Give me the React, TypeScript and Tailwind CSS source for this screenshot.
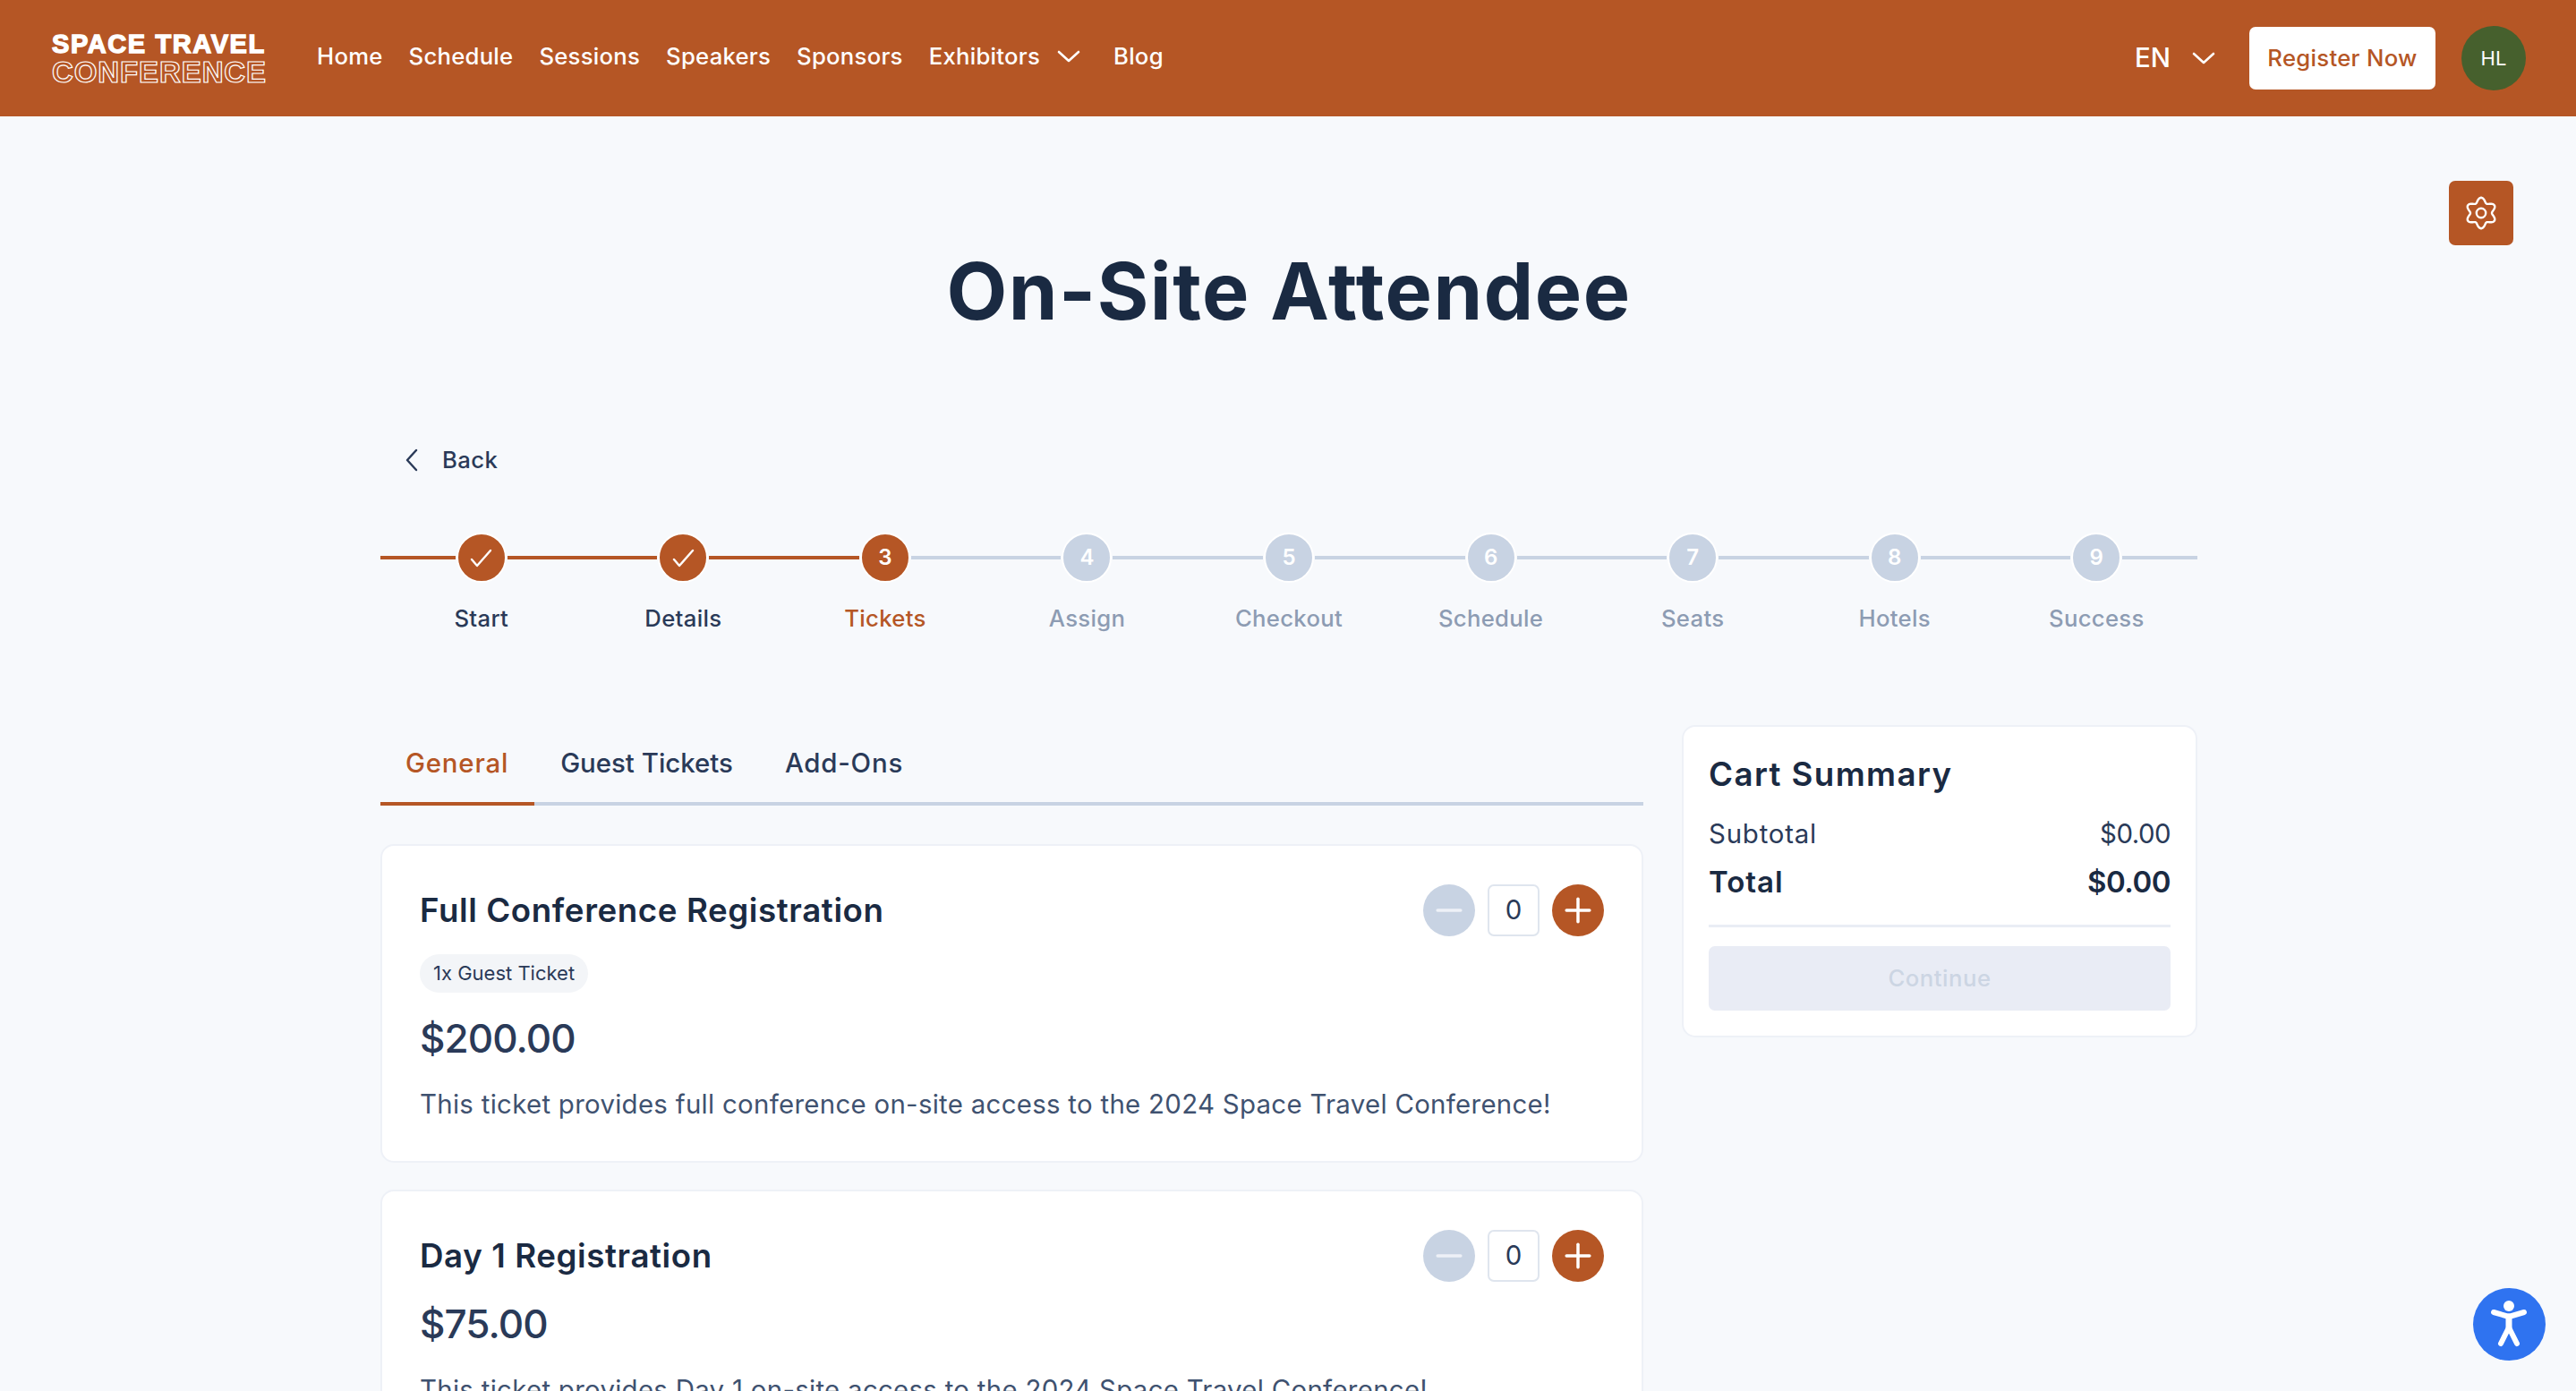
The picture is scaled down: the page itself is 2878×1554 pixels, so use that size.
import { Minus, Plus } from "lucide-react";

const navItems = ["Home", "Schedule", "Sessions", "Speakers", "Sponsors", "Exhibitors"];
const steps = ["Start", "Details", "Tickets", "Assign", "Checkout", "Schedule", "Seats", "Hotels", "Success"];

// six lobed outline of the settings cog
const cogPoints = Array.from({ length: 120 }, (_, i) => {
  const t = (i / 120) * Math.PI * 2;
  const r = 14.6 + 2.6 * Math.cos(6 * t);
  return `${(19 + r * Math.sin(t)).toFixed(2)},${(19 - r * Math.cos(t)).toFixed(2)}`;
}).join(" ");

function ChevronDown({ className }: { className?: string }) {
  return (
    <svg viewBox="0 0 26 14" className={className} fill="none" stroke="currentColor" strokeWidth="2.6" strokeLinecap="round" strokeLinejoin="round">
      <path d="M2 2l11 10L24 2" />
    </svg>
  );
}

function Header() {
  return (
    <header className="flex h-[130px] items-center bg-[#b55625] pl-[58px] pr-[56px] text-white">
      <div className="flex w-[240px] flex-col items-start font-['Liberation_Sans',sans-serif]">
        <span className="h-[31px] whitespace-nowrap text-[29px] leading-[31px] font-black tracking-[1.6px] [-webkit-text-stroke:1.4px_white]">SPACE TRAVEL</span>
        <span className="h-[31px] whitespace-nowrap text-[33px] leading-[31px] font-bold tracking-[0.9px] text-transparent [-webkit-text-stroke:1.2px_white]">CONFERENCE</span>
      </div>
      <nav className="ml-[56px] -mt-[3px] flex items-center gap-[29px] text-[25.7px] font-medium tracking-[0.25px]">
        {navItems.map((item) => (
          <a key={item}>{item}</a>
        ))}
        <ChevronDown className="-ml-[10px] h-[14px] w-[26px]" />
        <a className="ml-[8px]">Blog</a>
      </nav>
      <div className="ml-auto flex items-center">
        <span className="ml-[2px] text-[29.4px] font-medium">EN</span>
        <ChevronDown className="ml-[24px] h-[14px] w-[26px]" />
        <button className="ml-[38px] flex h-[70px] w-[208px] items-center justify-center rounded-[7px] bg-white text-[25.7px] font-medium tracking-[0.3px] text-[#b55625]">Register Now</button>
        <div className="ml-[29px] flex h-[72px] w-[72px] items-center justify-center rounded-full bg-[#46602d] text-[22px]">HL</div>
      </div>
    </header>
  );
}

function Stepper() {
  return (
    <div className="mt-[62px] flex">
      {steps.map((step, i) => {
        const done = i < 2;
        const current = i === 2;
        const reached = done || current;
        return (
          <div key={step} className="flex flex-1 flex-col items-center">
            <div className="relative flex h-[56px] w-full items-center justify-center">
              <div className={`absolute left-0 h-[4px] w-[calc(50%-29px)] ${reached ? "bg-[#b55625]" : "bg-[#c8d3e3]"}`} />
              <div className={`absolute right-0 h-[4px] w-[calc(50%-29px)] ${done ? "bg-[#b55625]" : "bg-[#c8d3e3]"}`} />
              <div className={`flex h-[56px] w-[56px] items-center justify-center rounded-full border-2 border-white text-[24px] font-semibold ${reached ? "bg-[#b55625] text-white" : "bg-[#c8d3e3] text-white"}`}>
                {done ? (
                  <svg viewBox="0 0 25 21" className="h-[21px] w-[25px]" fill="none" stroke="currentColor" strokeWidth="2.4" strokeLinecap="round" strokeLinejoin="round">
                    <path d="M2 12l6 7L23 2" />
                  </svg>
                ) : (
                  i + 1
                )}
              </div>
            </div>
            <span className={`mt-[21px] text-[25.7px] leading-[38px] font-medium tracking-[0.3px] ${done ? "text-[#2a3a58]" : current ? "text-[#b55625]" : "text-[#8d9cb3]"}`}>{step}</span>
          </div>
        );
      })}
    </div>
  );
}

function Counter() {
  return (
    <div className="flex items-center gap-[14px]">
      <button className="flex h-[58px] w-[58px] items-center justify-center rounded-full bg-[#c8d3e3] text-[#eef1f7]">
        <Minus size={44} strokeWidth={1.9} />
      </button>
      <div className="flex h-[58px] w-[58px] items-center justify-center rounded-[7px] border-2 border-[#dfe5ee] bg-white text-[29.4px] text-[#2a3a58]">0</div>
      <button className="flex h-[58px] w-[58px] items-center justify-center rounded-full bg-[#b55625] text-white">
        <Plus size={44} strokeWidth={1.9} />
      </button>
    </div>
  );
}

function TicketCard({ title, badge, price, description }: { title: string; badge?: string; price: string; description: string }) {
  return (
    <div className="rounded-[15px] border-2 border-[#eef1f7] bg-white px-[42px] pt-[43px] pb-[41px]">
      <div className="flex items-center justify-between">
        <h2 className="text-[36.7px] leading-[58px] font-semibold tracking-[0.6px] text-[#1a2a42]">{title}</h2>
        <Counter />
      </div>
      {badge && (
        <div className="mt-[20px] mb-[18px]">
          <span className="inline-block rounded-full bg-[#f3f5f8] px-[15px] text-[22px] leading-[43px] text-[#2a3a58]">{badge}</span>
        </div>
      )}
      <div className="mt-[14px] text-[44px] leading-[66px] font-medium tracking-[-0.9px] text-[#2a3a58]">{price}</div>
      <p className="mt-[19px] text-[29.4px] leading-[44px] tracking-[0.3px] text-[#3f5270]">{description}</p>
    </div>
  );
}

function CartSummary() {
  return (
    <aside className="h-[349px] w-[576px] rounded-[15px] border-2 border-[#eef1f7] bg-white px-[28px] pt-[25px]">
      <h2 className="text-[36.7px] leading-[55px] font-semibold tracking-[1.4px] text-[#1a2a42]">Cart Summary</h2>
      <div className="mt-[18px] flex justify-between text-[29.4px] leading-[44px] text-[#2a3a58]">
        <span className="tracking-[0.8px]">Subtotal</span>
        <span className="tracking-[-0.5px]">$0.00</span>
      </div>
      <div className="mt-[9px] flex justify-between text-[33px] leading-[44px] font-semibold text-[#1a2a42]">
        <span className="tracking-[1px]">Total</span>
        <span className="tracking-[-0.5px]">$0.00</span>
      </div>
      <div className="mt-[26px] h-[3px] bg-[#e9edf5]" />
      <button className="mt-[21px] h-[72px] w-full rounded-[7px] bg-[#e9ecf5] text-[25.7px] font-medium tracking-[0.5px] text-[#ccd5e3]">Continue</button>
    </aside>
  );
}

export default function App() {
  return (
    <div className="relative h-screen overflow-hidden bg-[#f7f9fc] font-['Inter',sans-serif]">
      <Header />
      <button className="absolute top-[202px] right-[70px] flex h-[72px] w-[72px] items-center justify-center rounded-[7px] bg-[#b55625] text-white">
        <svg viewBox="0 0 38 38" className="h-[38px] w-[38px]" fill="none" stroke="currentColor" strokeWidth="2.4" strokeLinejoin="round">
          <polygon points={cogPoints} />
          <circle cx="19" cy="19" r="5.2" />
        </svg>
      </button>
      <main className="ml-[425px] w-[2030px] pt-[146px]">
        <h1 className="text-center text-[88px] leading-[98px] font-bold tracking-[1.5px] text-[#1a2a42]">On-Site Attendee</h1>
        <div className="mt-[121px] flex h-[38px] items-center pl-[28px] text-[25.7px] font-medium text-[#2a3a58]">
          <svg viewBox="0 0 14 26" className="h-[26px] w-[14px]" fill="none" stroke="currentColor" strokeWidth="2.4" strokeLinecap="round" strokeLinejoin="round">
            <path d="M12 2L2 13l10 11" />
          </svg>
          <span className="ml-[27px] tracking-[0.4px]">Back</span>
        </div>
        <Stepper />
        <div className="mt-[100px] flex items-start justify-between">
          <div className="w-[1411px]">
            <div className="flex border-b-4 border-[#c8d3e3] text-[29.4px] leading-[44px] font-medium">
              <div className="-mb-[4px] border-b-4 border-[#b55625] pt-[21px] pr-[29px] pb-[21px] pl-[28px] tracking-[0.8px] text-[#b55625]">General</div>
              <div className="pt-[21px] pb-[21px] pl-[29px] text-[#2a3a58]">Guest Tickets</div>
              <div className="pt-[21px] pb-[21px] pl-[58px] tracking-[0.8px] text-[#2a3a58]">Add-Ons</div>
            </div>
            <div className="mt-[43px] flex flex-col gap-[30px]">
              <TicketCard
                title="Full Conference Registration"
                badge="1x Guest Ticket"
                price="$200.00"
                description="This ticket provides full conference on-site access to the 2024 Space Travel Conference!"
              />
              <TicketCard
                title="Day 1 Registration"
                price="$75.00"
                description="This ticket provides Day 1 on-site access to the 2024 Space Travel Conference!"
              />
            </div>
          </div>
          <CartSummary />
        </div>
      </main>
      <button className="absolute top-[1439px] left-[2763px] flex h-[81px] w-[81px] items-center justify-center rounded-full bg-[#2f73f0]">
        <svg viewBox="0 0 81 81" className="h-[81px] w-[81px]" fill="none" stroke="white" strokeLinecap="round" strokeLinejoin="round">
          <circle cx="40" cy="20" r="6" fill="white" stroke="none" />
          <path d="M23 27l17 5 17-5" strokeWidth="6" />
          <path d="M40 32v12" strokeWidth="7" />
          <path d="M40 44l-9 18M40 44l9 18" strokeWidth="6" />
        </svg>
      </button>
    </div>
  );
}
